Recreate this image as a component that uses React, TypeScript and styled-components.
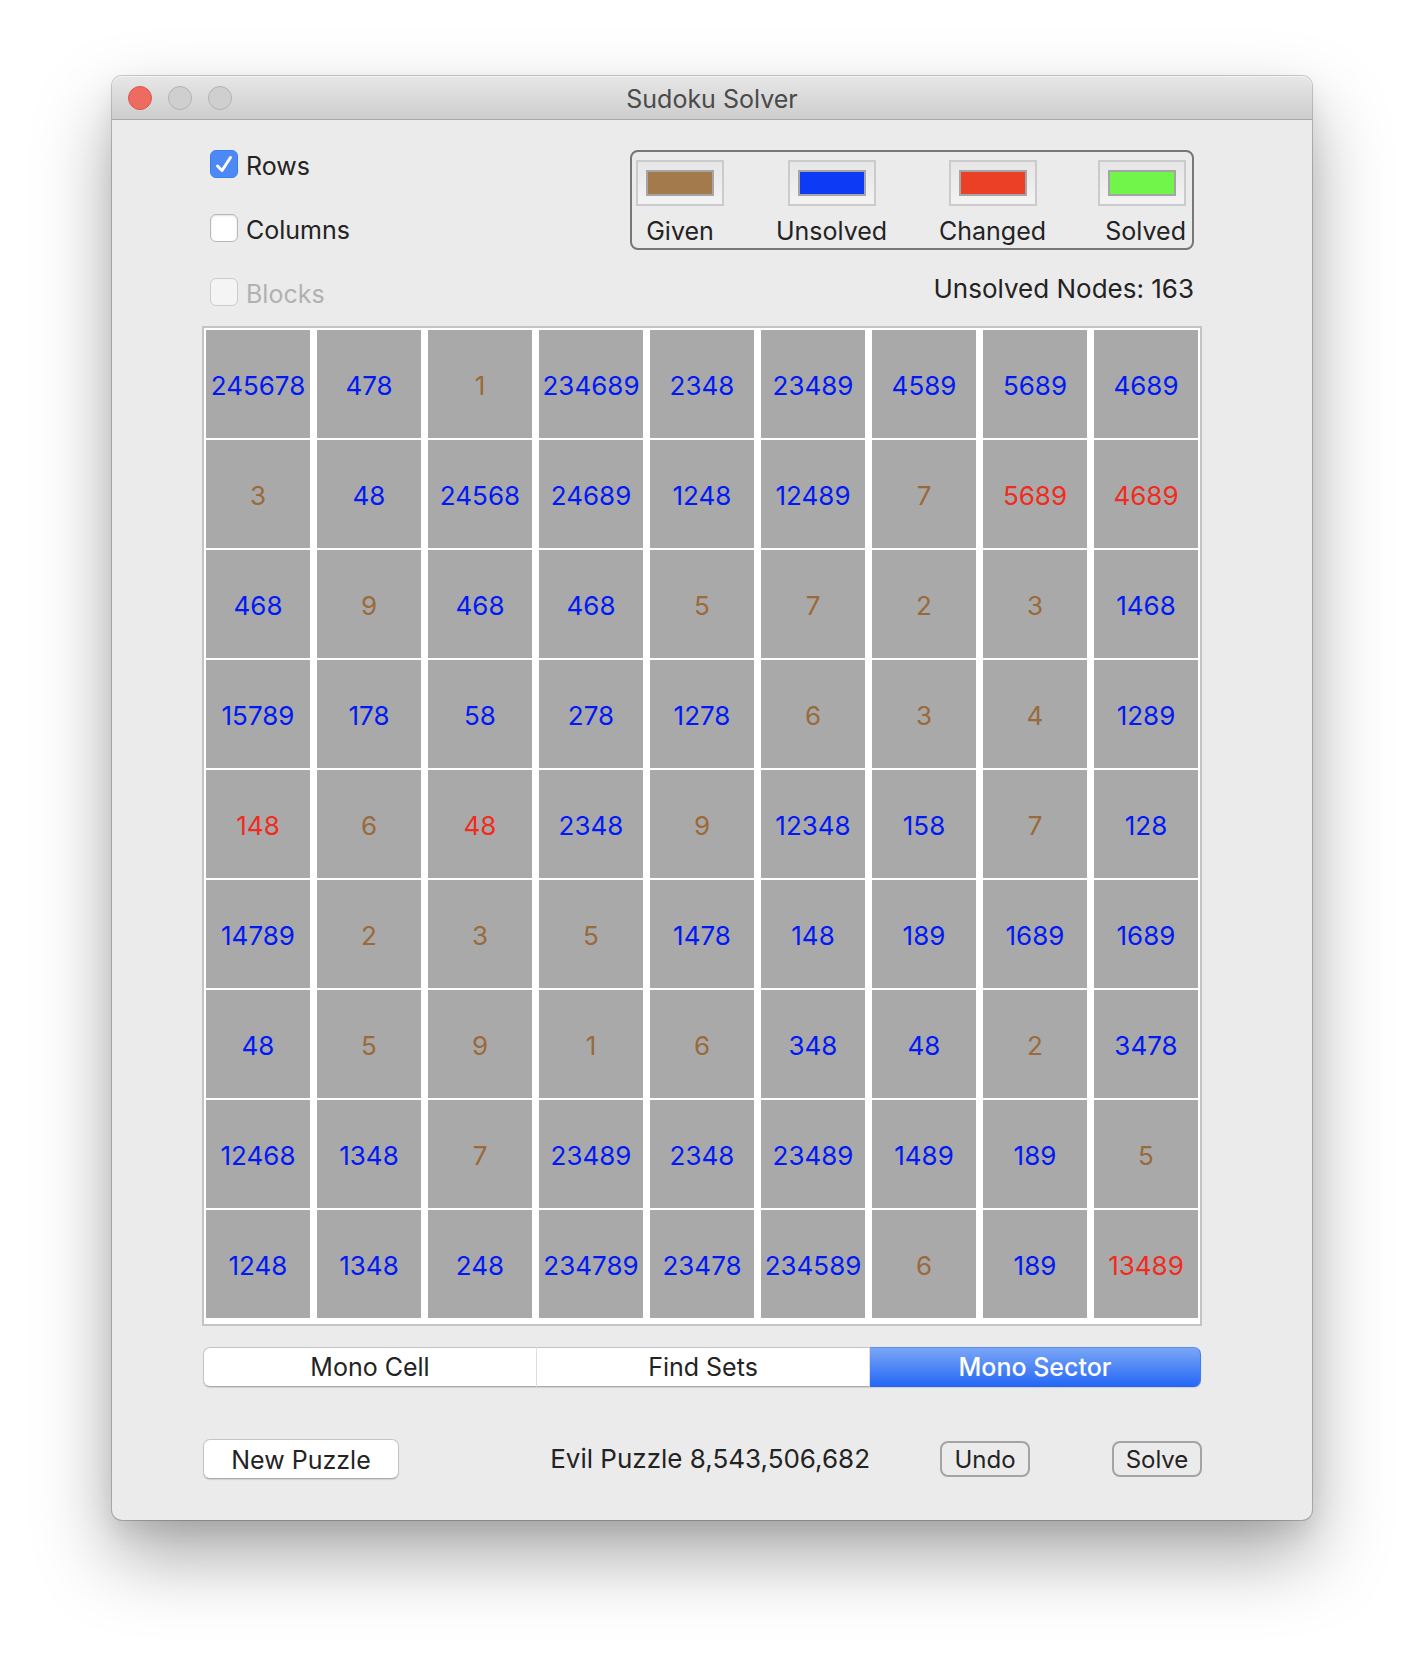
import React, { useState } from "react";
import styled, { createGlobalStyle } from "styled-components";

const GlobalStyle = createGlobalStyle`
  * { box-sizing: border-box; }
  body {
    margin: 0;
    background: #ffffff;
    color: #232323;
    font-family: Inter, "Liberation Sans", sans-serif;
    font-size: 25px;
    line-height: 30px;
  }
  button, input { font: inherit; color: inherit; }
`;

type CellState = "given" | "unsolved" | "changed";

const cellColors: Record<CellState, string> = {
  given: "#996a3b",
  unsolved: "#0119f5",
  changed: "#f02b20",
};

/* Single digits are givens; a trailing "!" marks a cell changed by the last step. */
const rows: string[] = [
  "245678 478 1 234689 2348 23489 4589 5689 4689",
  "3 48 24568 24689 1248 12489 7 5689! 4689!",
  "468 9 468 468 5 7 2 3 1468",
  "15789 178 58 278 1278 6 3 4 1289",
  "148! 6 48! 2348 9 12348 158 7 128",
  "14789 2 3 5 1478 148 189 1689 1689",
  "48 5 9 1 6 348 48 2 3478",
  "12468 1348 7 23489 2348 23489 1489 189 5",
  "1248 1348 248 234789 23478 234589 6 189 13489!",
];

const Desktop = styled.div`
  padding: 76px 112px 148px;
`;

const Window = styled.main`
  border-radius: 10px;
  background: #ebebeb;
  box-shadow:
    0 0 0 1px rgba(0, 0, 0, 0.2),
    0 12px 24px rgba(0, 0, 0, 0.08),
    0 36px 76px rgba(0, 0, 0, 0.34);
`;

const TitleBar = styled.header`
  display: grid;
  grid-template-columns: 1fr auto 1fr;
  align-items: center;
  height: 44px;
  padding: 0 16px;
  border-bottom: 1px solid #a9a9a9;
  border-radius: 10px 10px 0 0;
  background: linear-gradient(#e7e7e7, #cdcdcd);
  box-shadow: inset 0 1px 0 #f4f4f4;
`;

const Lights = styled.div`
  display: flex;
  gap: 16px;
`;

const Light = styled.button<{ $active?: boolean }>`
  width: 24px;
  height: 24px;
  padding: 0;
  border: 1px solid ${(p) => (p.$active ? "#d9574d" : "#b2b2b2")};
  border-radius: 50%;
  background: ${(p) => (p.$active ? "#ed6b60" : "#cfcfcf")};
`;

const Title = styled.h1`
  margin: 0;
  padding-top: 2px;
  color: #4a4a4a;
  font-size: 25px;
  font-weight: 400;
`;

const Content = styled.div`
  padding: 30px 110px 41px 90px;
`;

const TopArea = styled.section`
  display: flex;
  justify-content: space-between;
  padding: 0 8px 16px;
`;

const Options = styled.div`
  display: flex;
  flex-direction: column;
  gap: 32px;
`;

const Option = styled.label<{ $disabled?: boolean }>`
  display: flex;
  align-items: flex-start;
  gap: 8px;
  line-height: 32px;
  color: ${(p) => (p.$disabled ? "#b1b1b1" : "inherit")};
`;

const BoxHolder = styled.span`
  display: grid;
  width: 28px;
  height: 28px;

  > * { grid-area: 1 / 1; }
`;

const Tick = styled.svg`
  width: 28px;
  height: 28px;
  pointer-events: none;
`;

const CheckInput = styled.input`
  appearance: none;
  width: 28px;
  height: 28px;
  margin: 0;
  border: 1px solid #b7b7b7;
  border-radius: 6px;
  background: #ffffff;
  box-shadow: inset 0 1px 2px rgba(0, 0, 0, 0.12);

  &:checked {
    border-color: #3e7def;
    background: #4c89f5;
    box-shadow: none;
  }

  &:disabled {
    border-color: #cbcbcb;
    background: #f4f4f4;
    box-shadow: none;
  }
`;

const Side = styled.div`
  display: flex;
  flex-direction: column;
  gap: 24px;
  width: 564px;
`;

const Legend = styled.div`
  display: flex;
  justify-content: space-between;
  padding: 8px 6px 2px 4px;
  border: 2px solid #777777;
  border-radius: 8px;
`;

const LegendItem = styled.label<{ $align?: string }>`
  display: flex;
  flex-direction: column;
  align-items: ${(p) => p.$align ?? "center"};
  gap: 10px;
`;

const ColorWell = styled.input`
  appearance: none;
  display: block;
  width: 88px;
  height: 46px;
  padding: 8px;
  border: 2px solid #cbcbcb;
  background: linear-gradient(#e6e6e6, #f3f3f3);

  &::-webkit-color-swatch-wrapper { padding: 0; }
  &::-webkit-color-swatch {
    border: 2px solid #a5a5a5;
    border-radius: 0;
  }
`;

const Status = styled.p`
  margin: 0;
  font-size: 26px;
  text-align: right;
`;

const Board = styled.table`
  display: block;
  padding: 2px 2px 6px;
  border: 2px solid #c4c4c4;
  background: #ffffff;
`;

const BoardBody = styled.tbody`
  display: grid;
  gap: 2px;
`;

const BoardRow = styled.tr`
  display: grid;
  grid-template-columns: repeat(9, minmax(0, 1fr));
  column-gap: 7px;
`;

const Cell = styled.td<{ $state: CellState }>`
  display: flex;
  align-items: center;
  justify-content: center;
  height: 108px;
  padding: 4px 0 0;
  background: #a9a9a9;
  color: ${(p) => cellColors[p.$state]};
  font-size: 26px;
`;

const Segments = styled.div`
  display: grid;
  grid-template-columns: 334fr 333fr 331fr;
  margin: 21px 1px 0;
  border-radius: 7px;
  box-shadow: 0 1px 1px rgba(0, 0, 0, 0.12);
`;

const Segment = styled.button<{ $selected: boolean }>`
  height: 40px;
  padding: 0;
  border: 1px solid;
  border-color: ${(p) => (p.$selected ? "#5b8fee #3c7cf4 #2866ee" : "#c4c4c4 #dedede #ababab")};
  border-left-width: 0;
  background: ${(p) => (p.$selected ? "linear-gradient(#7aa6f6, #2568f6)" : "#ffffff")};
  color: ${(p) => (p.$selected ? "#ffffff" : "inherit")};
  font-weight: ${(p) => (p.$selected ? 500 : 400)};

  &:first-child {
    border-left: 1px solid #c4c4c4;
    border-radius: 7px 0 0 7px;
  }
  &:last-child { border-radius: 0 7px 7px 0; }
`;

const Footer = styled.footer`
  display: flex;
  align-items: center;
  margin-top: 52px;
  padding-left: 1px;
`;

const PushButton = styled.button`
  width: 196px;
  height: 40px;
  padding: 2px 0 0;
  border: 1px solid #c4c4c4;
  border-bottom-color: #ababab;
  border-radius: 7px;
  background: #ffffff;
  box-shadow: 0 1px 1px rgba(0, 0, 0, 0.12);
`;

const PuzzleName = styled.p`
  margin: 0 70px 0 auto;
  font-size: 26px;
`;

const Actions = styled.div`
  display: flex;
  gap: 82px;
`;

const OutlineButton = styled.button`
  width: 90px;
  height: 36px;
  padding: 2px 0 0;
  border: 2px solid #a3a3a3;
  border-radius: 8px;
  background: transparent;
  font-size: 24px;
`;

function CheckOption(props: { label: string; initial?: boolean; disabled?: boolean }) {
  const [checked, setChecked] = useState(Boolean(props.initial));
  return (
    <Option $disabled={props.disabled}>
      <BoxHolder>
        <CheckInput
          type="checkbox"
          checked={checked}
          disabled={props.disabled}
          onChange={() => setChecked(!checked)}
        />
        {checked && (
          <Tick viewBox="0 0 28 28" aria-hidden="true">
            <path
              d="M7.5 16 L12 20.5 L20.5 7.5"
              fill="none"
              stroke="#ffffff"
              strokeWidth="3"
              strokeLinecap="round"
              strokeLinejoin="round"
            />
          </Tick>
        )}
      </BoxHolder>
      {props.label}
    </Option>
  );
}

const methods = ["Mono Cell", "Find Sets", "Mono Sector"];

const wells = [
  { label: "Given", color: "#a37a4b" },
  { label: "Unsolved", color: "#0d3af5" },
  { label: "Changed", color: "#eb4025" },
  { label: "Solved", color: "#72f54a", align: "flex-end" },
];

export default function App() {
  const [method, setMethod] = useState("Mono Sector");
  return (
    <>
      <GlobalStyle />
      <Desktop>
        <Window>
          <TitleBar>
            <Lights>
              <Light $active aria-label="Close" />
              <Light disabled aria-label="Minimize" />
              <Light disabled aria-label="Zoom" />
            </Lights>
            <Title>Sudoku Solver</Title>
          </TitleBar>
          <Content>
            <TopArea>
              <Options>
                <CheckOption label="Rows" initial />
                <CheckOption label="Columns" />
                <CheckOption label="Blocks" disabled />
              </Options>
              <Side>
                <Legend>
                  {wells.map((w) => (
                    <LegendItem key={w.label} $align={w.align}>
                      <ColorWell type="color" defaultValue={w.color} />
                      {w.label}
                    </LegendItem>
                  ))}
                </Legend>
                <Status>Unsolved Nodes: 163</Status>
              </Side>
            </TopArea>
            <Board>
              <BoardBody>
                {rows.map((row, r) => (
                  <BoardRow key={r}>
                    {row.split(" ").map((entry, c) => {
                      const value = entry.replace("!", "");
                      const state: CellState =
                        value !== entry ? "changed" : value.length === 1 ? "given" : "unsolved";
                      return (
                        <Cell key={c} $state={state}>
                          {value}
                        </Cell>
                      );
                    })}
                  </BoardRow>
                ))}
              </BoardBody>
            </Board>
            <Segments>
              {methods.map((m) => (
                <Segment
                  key={m}
                  $selected={m === method}
                  aria-pressed={m === method}
                  onClick={() => setMethod(m)}
                >
                  {m}
                </Segment>
              ))}
            </Segments>
            <Footer>
              <PushButton>New Puzzle</PushButton>
              <PuzzleName>Evil Puzzle 8,543,506,682</PuzzleName>
              <Actions>
                <OutlineButton>Undo</OutlineButton>
                <OutlineButton>Solve</OutlineButton>
              </Actions>
            </Footer>
          </Content>
        </Window>
      </Desktop>
    </>
  );
}
